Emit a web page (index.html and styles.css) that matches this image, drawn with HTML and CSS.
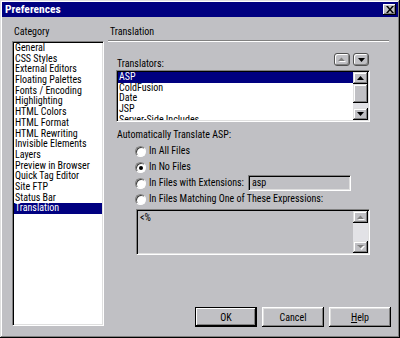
FILE: index.html
```html
<!DOCTYPE html>
<html>
<head>
<meta charset="utf-8">
<link rel="stylesheet" href="styles.css">
</head>
<body>
<div class="window">
  <div class="titlebar">
    <span class="title">Preferences</span>
    <span class="close"><svg width="8" height="7" viewBox="0 0 8 7"><path d="M0 0h2l2 2.5L6 0h2L5 3.5 8 7H6L4 4.5 2 7H0l3-3.5z" fill="#000"/></svg></span>
  </div>
  <div class="body">
    <div class="cat-col">
      <div class="label cat-label">Category</div>
      <ul class="listbox cat-list">
        <li>General</li>
        <li>CSS Styles</li>
        <li>External Editors</li>
        <li>Floating Palettes</li>
        <li>Fonts / Encoding</li>
        <li>Highlighting</li>
        <li>HTML Colors</li>
        <li>HTML Format</li>
        <li>HTML Rewriting</li>
        <li>Invisible Elements</li>
        <li>Layers</li>
        <li>Preview in Browser</li>
        <li>Quick Tag Editor</li>
        <li>Site FTP</li>
        <li>Status Bar</li>
        <li class="sel">Translation</li>
      </ul>
    </div>
    <div class="panel">
      <div class="panel-head">Translation</div>
      <div class="panel-content">
        <div class="trans-top">
          <span class="label">Translators:</span>
          <div class="arrows">
            <span class="rbtn"><svg width="8" height="5" viewBox="0 0 8 5"><path d="M1 5L4.5 1.5 8 5z" fill="#fff"/><path d="M0 4L3.5 0.5 7 4z" fill="#808080"/></svg></span>
            <span class="rbtn"><svg width="7" height="4" viewBox="0 0 7 4"><path d="M0 0h7L3.5 4z" fill="#000"/></svg></span>
          </div>
        </div>
        <div class="listbox trans-list">
          <ul class="items">
            <li class="sel">ASP</li>
            <li>ColdFusion</li>
            <li>Date</li>
            <li>JSP</li>
            <li>Server-Side Includes</li>
          </ul>
          <div class="vscroll">
            <span class="sbtn"><svg width="7" height="4" viewBox="0 0 7 4"><path d="M0 4L3.5 0 7 4z" fill="#000"/></svg></span>
            <span class="thumb"></span>
            <span class="track"></span>
            <span class="sbtn"><svg width="7" height="4" viewBox="0 0 7 4"><path d="M0 0h7L3.5 4z" fill="#000"/></svg></span>
          </div>
        </div>
        <div class="label auto-label">Automatically Translate ASP:</div>
        <div class="radios">
          <div class="radio-row"><span class="radio"></span><span class="label">In All Files</span></div>
          <div class="radio-row"><span class="radio on"></span><span class="label">In No Files</span></div>
          <div class="radio-row"><span class="radio"></span><span class="label">In Files with Extensions:</span><span class="field">asp</span></div>
          <div class="radio-row"><span class="radio"></span><span class="label">In Files Matching One of These Expressions:</span></div>
        </div>
        <div class="listbox expr">
          <div class="expr-text">&lt;%</div>
          <div class="vscroll">
            <span class="sbtn"><svg width="8" height="5" viewBox="0 0 8 5"><path d="M1 5L4.5 1.5 8 5z" fill="#fff"/><path d="M0 4L3.5 0.5 7 4z" fill="#808080"/></svg></span>
            <span class="track"></span>
            <span class="sbtn"><svg width="8" height="5" viewBox="0 0 8 5"><path d="M1 1h7L4.5 5z" fill="#fff"/><path d="M0 0h7L3.5 3.5z" fill="#808080"/></svg></span>
          </div>
        </div>
      </div>
      <div class="buttons">
        <span class="btn default">OK</span>
        <span class="btn">Cancel</span>
        <span class="btn"><u>H</u>elp</span>
      </div>
    </div>
  </div>
</div>
</body>
</html>
```
FILE: styles.css
```css
* { box-sizing: border-box; }
html, body { margin: 0; padding: 0; }
body {
  width: 400px;
  height: 338px;
  font-family: "Roboto Condensed", "Liberation Sans", sans-serif;
  font-size: 10px;
  color: #000;
  background: #c0c0c0;
}
ul { list-style: none; margin: 0; padding: 0; }

.window {
  width: 400px;
  height: 338px;
  padding: 2px;
  background: #c0c0c4;
  display: flex;
  flex-direction: column;
  box-shadow: inset -1px -1px #000, inset 1px 1px #dfdfdf, inset -2px -2px #808080, inset 2px 2px #fff;
}

.titlebar {
  height: 15px;
  background: #000080;
  display: flex;
  align-items: center;
  justify-content: space-between;
  padding: 0 2px 0 3px;
}
.title {
  color: #fff;
  font-weight: bold;
  font-size: 11.5px;
  line-height: 15px;
}
.close {
  width: 13px;
  height: 11px;
  background: #c0c0c4;
  display: flex;
  align-items: center;
  justify-content: center;
  box-shadow: inset -1px -1px #000, inset 1px 1px #fff, inset -2px -2px #808080;
}
.close svg { display: block; }

.body {
  flex: 1;
  display: flex;
  padding: 9px 7px 9px 10px;
}

.cat-col {
  width: 92px;
  display: flex;
  flex-direction: column;
}
.label { line-height: 12px; white-space: nowrap; }
.cat-label { margin: 0 0 3px 2px; }

.listbox {
  background: #fff;
  border: 1px solid;
  border-color: #808080 #fff #fff #808080;
  box-shadow: inset 1px 1px #000, inset -1px -1px #dfdfdf;
  padding: 1px;
}
.cat-list {
  flex: 1;
  margin-bottom: 1px;
  overflow: hidden;
}
.cat-list li, .items li {
  line-height: 10.7px;
  height: 10.7px;
  padding-left: 1px;
  white-space: nowrap;
}
.sel { background: #000080; color: #fff; }

.panel {
  flex: 1;
  margin-left: 4px;
  display: flex;
  flex-direction: column;
}
.panel-head {
  line-height: 12px;
  padding-left: 2px;
  height: 15px;
  border-bottom: 1px solid #808080;
  box-shadow: 0 1px #fff;
  margin-right: 2px;
}
.panel-content {
  padding: 12px 21px 0 8px;
  display: flex;
  flex-direction: column;
}
.trans-top {
  height: 17px;
  display: flex;
  justify-content: space-between;
}
.trans-top .label { align-self: flex-end; line-height: 13px; padding-left: 1px; }
.arrows { display: flex; gap: 3px; padding-right: 1px; }
.rbtn {
  width: 16px;
  height: 13px;
  border: 1px solid #505050;
  border-radius: 3px;
  background: #c0c0c4;
  box-shadow: inset 1px 1px #fff, inset -1px -1px #808080;
  display: flex;
  align-items: center;
  justify-content: center;
}
.rbtn svg { display: block; }

.trans-list {
  height: 52px;
  display: flex;
  overflow: hidden;
}
.items { flex: 1; overflow: hidden; }

.vscroll {
  width: 15px;
  display: flex;
  flex-direction: column;
}
.sbtn {
  height: 12px;
  background: #c0c0c4;
  box-shadow: inset -1px -1px #000, inset 1px 1px #dfdfdf, inset -2px -2px #808080, inset 2px 2px #fff;
  display: flex;
  align-items: center;
  justify-content: center;
  flex: none;
}
.sbtn svg { display: block; }
.thumb {
  height: 19px;
  flex: none;
  background: #c0c0c4;
  box-shadow: inset -1px -1px #000, inset 1px 1px #dfdfdf, inset -2px -2px #808080, inset 2px 2px #fff;
}
.track { flex: 1; background: #e2e2e6; }

.auto-label { margin-top: 7px; padding-left: 1px; }

.radios { display: flex; flex-direction: column; margin-top: 2px; }
.radio-row {
  height: 16px;
  display: flex;
  align-items: center;
  padding-left: 19px;
}
.radio {
  width: 11px;
  height: 11px;
  border-radius: 50%;
  background: #fff;
  border: 1px solid;
  border-color: #808080 #fff #fff #808080;
  box-shadow: inset 1px 1px #404040;
  margin-right: 3px;
  position: relative;
  flex: none;
}
.radio.on::after {
  content: "";
  position: absolute;
  left: 3px;
  top: 3px;
  width: 4px;
  height: 4px;
  border-radius: 50%;
  background: #000;
}
.field {
  margin-left: 4px;
  width: 103px;
  height: 16px;
  border: 1px solid;
  border-color: #808080 #fff #fff #808080;
  box-shadow: inset 1px 1px #000, inset -1px -1px #dfdfdf;
  background: #c0c0c4;
  padding: 0 3px;
  line-height: 14px;
}

.expr {
  margin: 2px 0 0 20px;
  height: 46px;
  background: #c0c0c4;
  display: flex;
}
.expr-text { flex: 1; padding: 1px 2px; line-height: 12px; }

.buttons {
  margin-top: auto;
  display: flex;
  justify-content: flex-end;
  gap: 5px;
}
.btn {
  width: 62px;
  height: 20px;
  display: flex;
  align-items: center;
  justify-content: center;
  background: #c0c0c4;
  box-shadow: inset -1px -1px #000, inset 1px 1px #fff, inset -2px -2px #808080, inset 2px 2px #dfdfdf;
}
.btn.default {
  border: 1px solid #000;
  box-shadow: inset -1px -1px #000, inset 1px 1px #fff, inset -2px -2px #808080;
}
```
